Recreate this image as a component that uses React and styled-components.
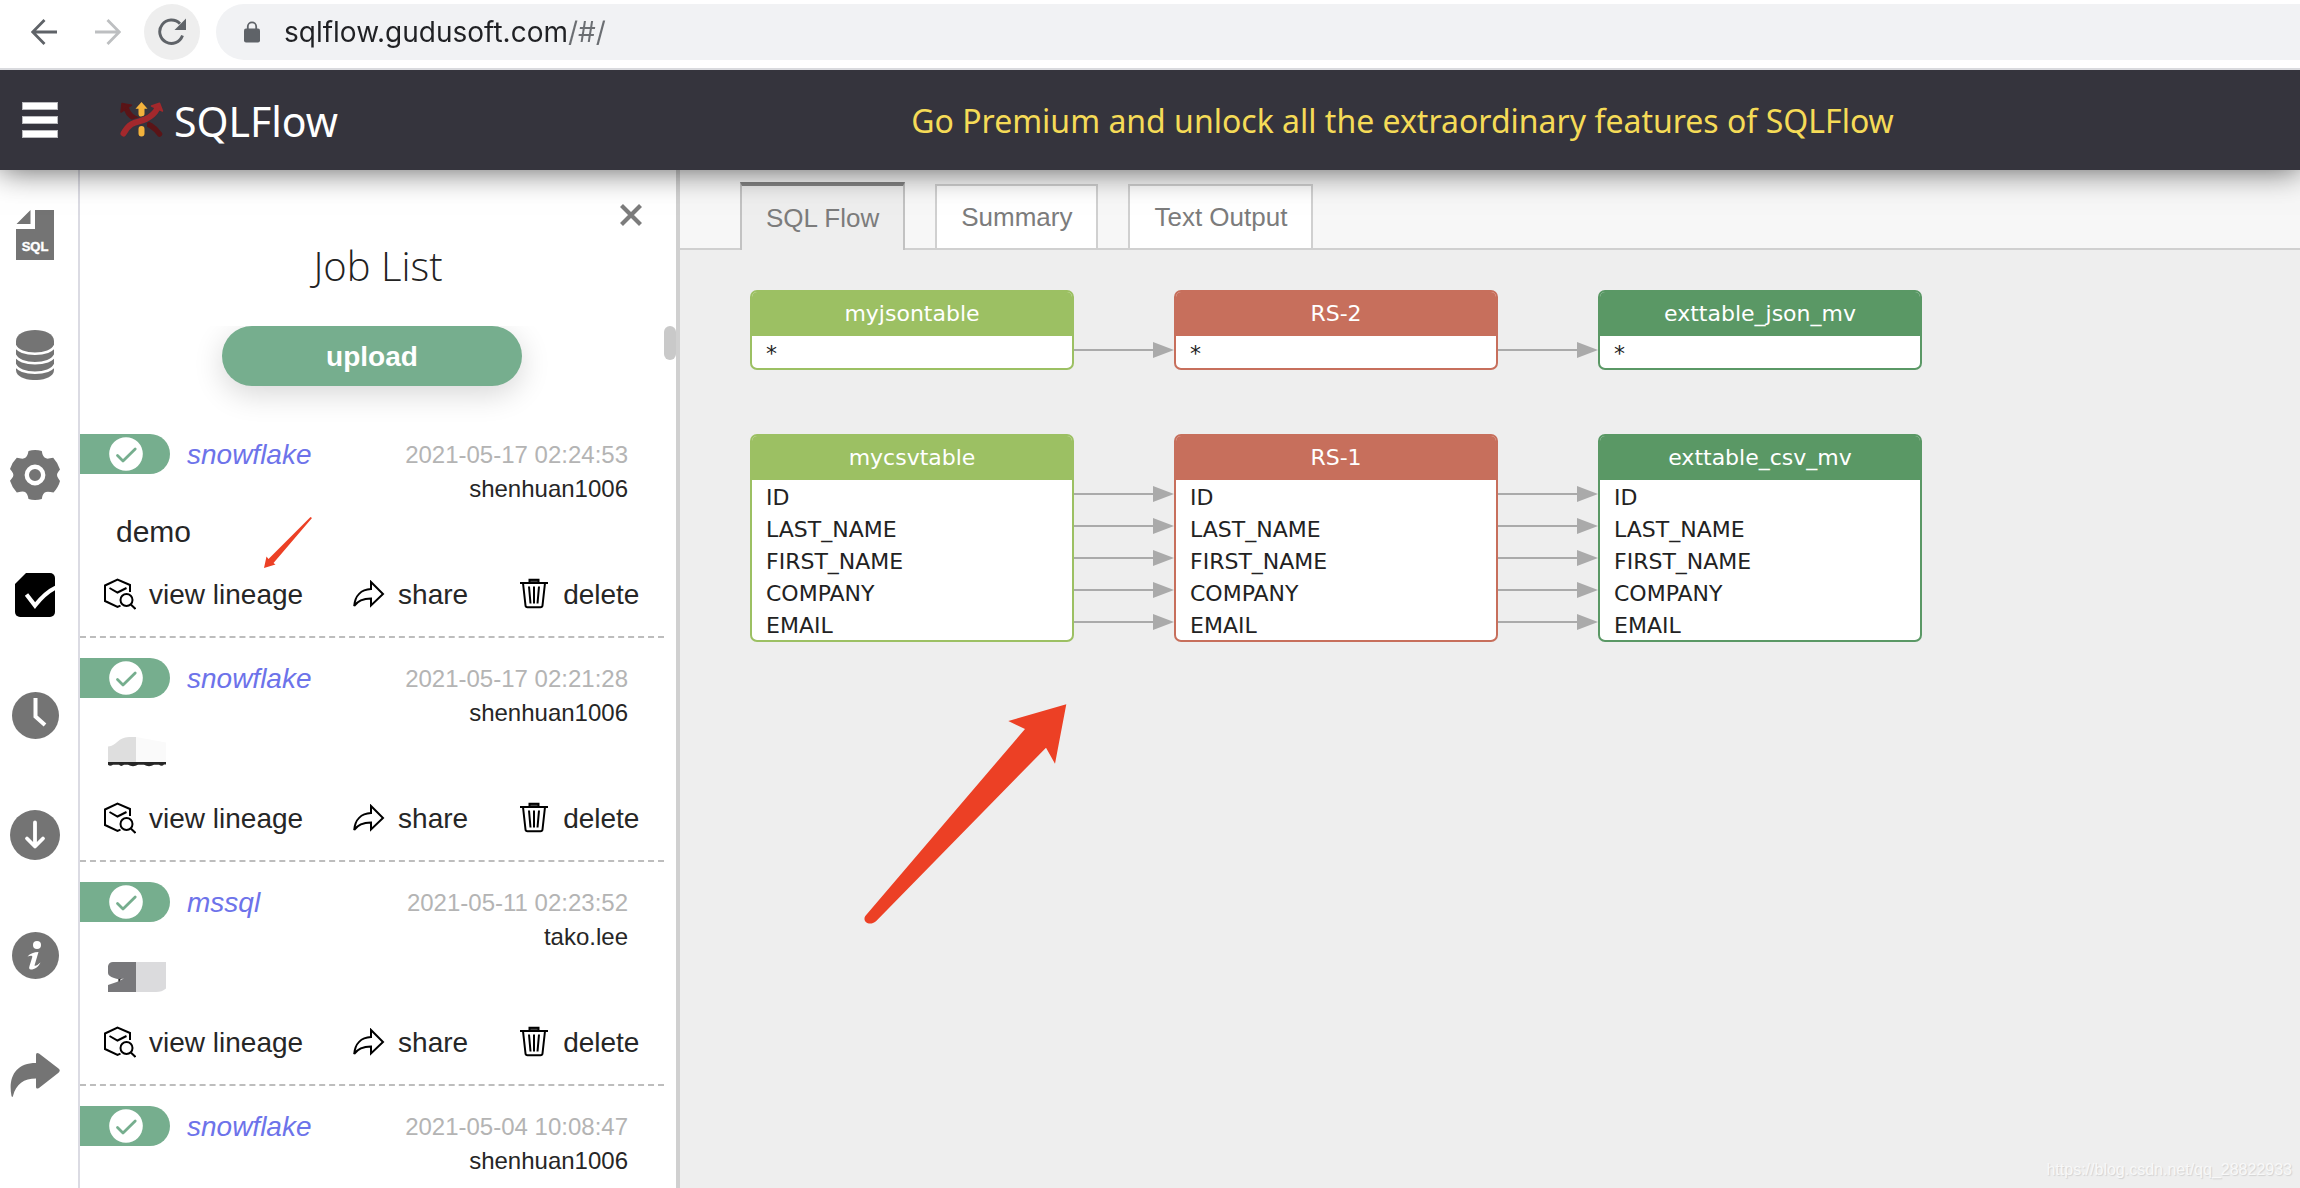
import React from "react";
import styled, { createGlobalStyle } from "styled-components";

const arial = '"Liberation Sans", Arial, sans-serif';
const humanist = '"Noto Sans", "Open Sans", sans-serif';
const green = "#76ae8e";
const iconGray = "#747474";
const red = "#ec4025";

const GlobalStyle = createGlobalStyle`
  * { box-sizing: border-box; }
  body { margin: 0; font-family: ${arial}; background: #fff; }
  button { border: 0; padding: 0; margin: 0; background: none; font: inherit; color: inherit; cursor: pointer; }
  svg { display: block; flex: none; }
`;

const Page = styled.div`
  height: 100vh;
  display: flex;
  flex-direction: column;
  overflow: hidden;
`;

const BrowserBar = styled.div`
  display: flex;
  align-items: center;
  height: 70px;
  padding: 4px 0 8px 16px;
  background: #fff;
  border-bottom: 2px solid #d9dade;
  z-index: 3;
  flex: none;
`;

const NavButton = styled.button`
  display: flex;
  align-items: center;
  justify-content: center;
  width: 56px;
  height: 56px;
  margin-right: 8px;
  border-radius: 28px;
  background: ${(p) => (p.$active ? "#eee" : "transparent")};
`;

const AddressBar = styled.form`
  display: flex;
  align-items: center;
  flex: 1;
  gap: 24px;
  height: 56px;
  margin-left: 8px;
  padding-left: 28px;
  border-radius: 28px 0 0 28px;
  background: #f1f2f4;
`;

const AddressInput = styled.input`
  flex: 1;
  min-width: 0;
  height: 40px;
  padding: 0;
  border: 0;
  outline: 0;
  font-family: Inter, Roboto, sans-serif;
  font-size: 28px;
  color: #202124;
  background: linear-gradient(90deg, #202124 284px, #6b6e72 284px);
  -webkit-background-clip: text;
  background-clip: text;
  -webkit-text-fill-color: transparent;
`;

const Header = styled.header`
  display: flex;
  align-items: center;
  height: 100px;
  flex: none;
  background: #35343d;
  box-shadow: 0 0 30px rgba(0, 0, 0, 0.65);
  z-index: 2;
`;

const Brand = styled.div`
  display: flex;
  align-items: center;
  width: 505px;
  padding-left: 22px;
`;

const MenuButton = styled.button`
  display: flex;
  flex-direction: column;
  gap: 6px;
  width: 36px;
  margin-right: 62px;
`;

const MenuBar = styled.span`
  height: 8px;
  background: #fff;
  border: 1px solid #b9b9bd;
`;

const BrandName = styled.span`
  margin-left: 10px;
  padding-top: 2px;
  font-family: ${humanist};
  font-size: 41px;
  line-height: 56px;
  color: #fff;
`;

const Premium = styled.div`
  flex: 1;
  padding-top: 2px;
  text-align: center;
  font-family: ${humanist};
  font-size: 32px;
  line-height: 44px;
  color: #f5db57;
`;

const Body = styled.div`
  display: flex;
  flex: 1;
  min-height: 0;
`;

const Rail = styled.nav`
  display: flex;
  flex-direction: column;
  width: 80px;
  padding: 5px 8px 0 0;
  border-right: 2px solid #dbdbe3;
  flex: none;
`;

const RailButton = styled.button`
  display: flex;
  align-items: center;
  justify-content: center;
  height: 120px;
  flex: none;
`;

const Panel = styled.aside`
  display: flex;
  flex-direction: column;
  width: 600px;
  border-right: 4px solid #d0d0d0;
  flex: none;
`;

const PanelHead = styled.div`
  display: flex;
  flex-direction: column;
  padding: 34px 34px 30px;
`;

const CloseButton = styled.button`
  align-self: flex-end;
`;

const PanelTitle = styled.h1`
  margin: 10px 0 0;
  text-align: center;
  font-family: "Open Sans", "Noto Sans", sans-serif;
  font-weight: 300;
  font-size: 40px;
  line-height: 60px;
  color: #222;
`;

const Scroller = styled.div`
  position: relative;
  flex: 1;
  min-height: 0;
  overflow: hidden;
  padding-right: 12px;
`;

const ScrollThumb = styled.div`
  position: absolute;
  top: 0;
  right: 0;
  width: 12px;
  height: 34px;
  border-radius: 6px;
  background: #c9c9c9;
`;

const UploadButton = styled.button`
  display: block;
  width: 300px;
  height: 60px;
  margin: 0 auto 28px;
  padding-top: 2px;
  border-radius: 30px;
  background: ${green};
  color: #fff;
  font-size: 28px;
  font-weight: 700;
  box-shadow: 0 8px 30px rgba(0, 0, 0, 0.16);
`;

const Jobs = styled.ul`
  list-style: none;
  margin: 0;
  padding: 0;
`;

const Job = styled.li`
  padding: 20px 0 10px;
  border-bottom: 2px dashed #bdbdbd;
  color: #262626;
`;

const JobHead = styled.div`
  display: flex;
  align-items: flex-start;
  height: 68px;
  padding-right: 36px;
`;

const Badge = styled.span`
  display: flex;
  align-items: center;
  width: 90px;
  height: 40px;
  padding-left: 29px;
  border-radius: 0 20px 20px 0;
  background: ${green};
`;

const Vendor = styled.span`
  flex: 1;
  padding-left: 17px;
  font-size: 28px;
  line-height: 42px;
  font-style: italic;
  color: #6d73ea;
`;

const Meta = styled.div`
  display: flex;
  flex-direction: column;
  align-items: flex-end;
  font-size: 24px;
  line-height: 28px;
`;

const Stamp = styled.time`
  line-height: 41px;
  color: #b4b4b4;
`;

const JobTitle = styled.div`
  height: 60px;
  padding-left: ${(p) => (p.$masked ? 28 : 36)}px;
  font-size: 30px;
  line-height: 60px;
`;

const Actions = styled.div`
  display: flex;
  align-items: center;
  gap: 50px;
  height: 64px;
  padding-left: 24px;
`;

const Action = styled.button`
  display: flex;
  align-items: center;
  gap: 13px;
  font-size: 28px;
  line-height: 32px;
  white-space: nowrap;
`;

const ActionLabel = styled.span`
  padding-top: 2px;
`;

const Main = styled.main`
  position: relative;
  display: flex;
  flex-direction: column;
  flex: 1;
  min-width: 0;
  background: #eee;
`;

const Tabs = styled.div`
  display: flex;
  align-items: flex-end;
  gap: 30px;
  height: 80px;
  padding-left: 60px;
  background: linear-gradient(#d0d0d0, #d0d0d0) 0 100% / 100% 2px no-repeat #f7f7f7;
`;

const Tab = styled.button`
  height: ${(p) => (p.$selected ? 68 : 66)}px;
  padding: 0 24px;
  font-size: 26px;
  color: #7c7c7c;
  background: ${(p) => (p.$selected ? "#eee" : "#fff")};
  border: 2px solid ${(p) => (p.$selected ? "#c2c2c2" : "#d0d0d0")};
  border-top: ${(p) => (p.$selected ? "4px solid #848484" : "2px solid #d0d0d0")};
  border-bottom: ${(p) => (p.$selected ? "0" : "2px solid #d0d0d0")};
`;

const Canvas = styled.div`
  display: flex;
  flex-direction: column;
  gap: 64px;
  padding: 40px 70px;
`;

const Flow = styled.div`
  display: flex;
`;

const Node = styled.section`
  width: 324px;
  border: 2px solid ${(p) => p.$color};
  border-radius: 7px;
  background: #fff;
  font-family: "DejaVu Sans", Verdana, sans-serif;
  font-size: 22px;
  color: #222;
  overflow: hidden;
`;

const NodeTitle = styled.h2`
  margin: 0;
  height: 44px;
  background: ${(p) => p.$color};
  color: #fff;
  text-align: center;
  font-size: 22px;
  font-weight: 400;
  line-height: 44px;
`;

const Columns = styled.ul`
  list-style: none;
  margin: 0;
  height: ${(p) => p.$count * 32}px;
  padding: 2px 0 0 14px;
  line-height: 32px;
`;

const Links = styled.div`
  width: 100px;
  padding-top: 46px;
`;

const BigArrow = styled.svg`
  position: absolute;
  left: 160px;
  top: 510px;
  pointer-events: none;
`;

const SmallArrow = styled.svg`
  position: absolute;
  left: 183px;
  top: 190px;
  pointer-events: none;
`;

const Watermark = styled.div`
  position: absolute;
  right: 8px;
  bottom: 8px;
  font-size: 16px;
  line-height: 20px;
  color: #f8f8f8;
  text-shadow: 1px 1px 1px #d2d2d2;
`;

const BackIcon = ({ color, flip }) => (
  <svg width="26" height="26" viewBox="0 0 26 26" fill="none" stroke={color} strokeWidth="2.8">
    <path d={flip ? "M0 13H24M12.5 1L24.3 13L12.5 25" : "M26 13H2M13.5 1L1.7 13L13.5 25"} />
  </svg>
);

const ReloadIcon = () => (
  <svg width="28" height="28" viewBox="0 0 28 28">
    <path d="M24.5 17.5A11.7 11.7 0 1 1 22 5.7" fill="none" stroke="#5f6368" strokeWidth="2.9" />
    <path d="M28 0.5V12H16.5Z" fill="#5f6368" />
  </svg>
);

const LockIcon = () => (
  <svg width="16" height="22" viewBox="0 0 16 22">
    <path d="M3.8 9V5.5a4.2 4.2 0 0 1 8.4 0V9" fill="none" stroke="#5f6368" strokeWidth="1.8" />
    <rect y="7.6" width="16" height="14" rx="2" fill="#5f6368" />
  </svg>
);

const Logo = () => (
  <svg width="44" height="36" viewBox="0 0 44 36" fill="none">
    <path d="M6.5 7C9 14 13 15.5 20 18.5S34 24 39.5 32" stroke="#5a1417" strokeWidth="5.5" strokeLinecap="round" />
    <path d="M2 1.5L11.5 3.2L1 10Z" fill="#5a1417" stroke="#5a1417" strokeWidth="1.5" strokeLinejoin="round" />
    <rect x="17" y="16" width="10" height="9" fill="#35343d" />
    <path d="M21.5 11.8V6M21.5 27V31.5" stroke="#f3b23c" strokeWidth="6" strokeLinecap="round" />
    <path d="M15.5 6.8L21.5 0L27.5 6.8Z" fill="#f3b23c" />
    <path d="M3.5 32C11 18 18 21 26 17C32 14 35 11 37 7" stroke="#35343d" strokeWidth="8" />
    <path d="M3.5 31.5C11 18 18 21 26 17C32 14 35 11 37 7" stroke="#a3282c" strokeWidth="6" strokeLinecap="round" />
    <path d="M31.5 4L39.5 1.2L42.5 9Z" fill="#a3282c" stroke="#a3282c" strokeWidth="1.5" strokeLinejoin="round" />
  </svg>
);

const SqlFileIcon = () => (
  <svg width="38" height="50" viewBox="0 0 38 50">
    <path d="M14.5 0V14H0.5ZM19 0H38V50H0V19H19Z" fill={iconGray} />
    <text x="19" y="41" textAnchor="middle" fontFamily="Liberation Sans, sans-serif" fontWeight="700" fontSize="13" fill="#fff" stroke="#fff" strokeWidth="0.4">SQL</text>
  </svg>
);

const DatabaseIcon = () => (
  <svg width="38" height="50" viewBox="0 0 38 50">
    <path d="M0 11C0 -3.6 38 -3.6 38 11V40C38 53.4 0 53.4 0 40Z" fill={iconGray} />
    <path d="M-1 15.5C3 26.5 35 26.5 39 15.5M-1 25C3 36 35 36 39 25M-1 34.5C3 45.5 35 45.5 39 34.5" fill="none" stroke="#fff" strokeWidth="2.6" />
  </svg>
);

const GearIcon = () => (
  <svg width="50" height="50" viewBox="0 0 50 50">
    <path
      fill={iconGray}
      d="M18.5 1Q25-.8 31.8 1L32.4 4Q34 9 38.5 8.6L43.2 7.8Q48 13 50 19.5L48.5 21.5Q45.5 25 48.5 28.8L50 31Q48.5 37 43.5 42.5L40.5 42Q34 40.5 32.4 46L31.8 49Q25 50.8 18.5 49L17.8 46Q16 40.5 10.5 41.8L6.8 42.5Q2 37.5 0 30.8L1.8 28.5Q5 25 1.8 21.2L0 19Q2 12.5 6.8 7.8L11 8.5Q16 9.5 17.8 4Z"
    />
    <circle cx="25" cy="25" r="8.2" fill={iconGray} stroke="#fff" strokeWidth="4.4" />
  </svg>
);

const TaskIcon = () => (
  <svg width="40" height="44" viewBox="0 0 40 44">
    <path d="M11 0H35a5 5 0 0 1 5 5V39a5 5 0 0 1-5 5H5a5 5 0 0 1-5-5V11Z" fill="#000" />
    <path d="M11.5 21.5L20 32.5C26 25 32 18.5 41 14.5" fill="none" stroke="#fff" strokeWidth="4.2" />
  </svg>
);

const ClockIcon = () => (
  <svg width="47" height="47" viewBox="0 0 47 47">
    <circle cx="23.5" cy="23.5" r="23.5" fill={iconGray} />
    <path d="M23.5 6V24.5L33 33" fill="none" stroke="#fff" strokeWidth="4" />
  </svg>
);

const DownloadIcon = () => (
  <svg width="50" height="50" viewBox="0 0 50 50">
    <circle cx="25" cy="25" r="25" fill={iconGray} />
    <path d="M25 12.5V36M17 28.5L25 36.5L33 28.5" fill="none" stroke="#fff" strokeWidth="3.8" strokeLinecap="round" strokeLinejoin="round" />
  </svg>
);

const InfoIcon = () => (
  <svg width="47" height="47" viewBox="0 0 47 47">
    <circle cx="23.5" cy="23.5" r="23.5" fill={iconGray} />
    <circle cx="25" cy="13" r="4" fill="#fff" />
    <path d="M15.5 24.5C18 21.5 22 20 26.500 20L22.5 33.5C23.5 34.5 25.5 33 28.5 30.5C26.5 35 22.5 37.5 19 37.5C17 37.5 16.8 36 17.5 34L20.3 25C20.5 23 18 23.5 15.5 24.5Z" fill="#fff" />
  </svg>
);

const ForwardIcon = () => (
  <svg width="50" height="44" viewBox="0 0 50 44">
    <path d="M26 10V2Q26-1 29 .6L48.5 15.5Q51 17.5 48.5 19.7L29 35Q26 36.5 26 34V25.5C14 25.5 6 31 3 43Q2.3 45 1.5 43C-2 25 5 10 26 10Z" fill={iconGray} />
  </svg>
);

const CloseIcon = () => (
  <svg width="22" height="22" viewBox="0 0 22 22">
    <path d="M1.5 1.5L20.5 20.5M20.5 1.5L1.5 20.5" stroke="#7c7c7c" strokeWidth="4.2" />
  </svg>
);

const CheckIcon = () => (
  <svg width="34" height="34" viewBox="0 0 34 34">
    <circle cx="17" cy="17" r="16.8" fill="#fff" />
    <path d="M8.5 18.5L14 24L26.2 12" fill="none" stroke={green} strokeWidth="2.8" strokeLinecap="round" strokeLinejoin="round" />
  </svg>
);

const LineageIcon = () => (
  <svg width="32" height="32" viewBox="0 0 32 32" fill="none" stroke="#000" strokeWidth="2">
    <path d="M26 14V7L13.5 1.5L1 7.5V23L13.5 29L16.5 27.7" />
    <path d="M5.5 10L13.5 14.5L22.5 10" />
    <circle cx="22.5" cy="22" r="6" />
    <path d="M26.8 26.5L31.5 31" />
  </svg>
);

const ShareIcon = () => (
  <svg width="32" height="28" viewBox="0 0 32 28" fill="none" stroke="#000" strokeWidth="2">
    <path d="M18 2L30 14L18 25.5V18.5C10 18.5 4.5 21 1.2 26C2 16 8 9.5 18 9Z" />
  </svg>
);

const TrashIcon = () => (
  <svg width="32" height="32" viewBox="0 0 32 32" fill="none" stroke="#000" strokeWidth="2">
    <path d="M2 5H30" />
    <path d="M11.5 4V1.8H20.5V4" fill="#444" />
    <path d="M5 5L7.5 27.5Q7.7 29.2 9.5 29.2H22.5Q24.3 29.2 24.5 27.5L27 5" />
    <path d="M11 8.5L12.5 25.5M16 8.5V25.5M21 8.5L19.5 25.5" />
  </svg>
);

const MaskLight = () => (
  <svg width="58" height="60" viewBox="0 0 58 60">
    <path d="M28 11L58 16.5V36H28Z" fill="#fafafa" />
    <path d="M0 20.5C9 20 10 11 21 11H28V36H0Z" fill="#dedede" />
    <path d="M0 36H58V38.5H56Q54 41 51 38.8H46Q41 41.5 36 38.8H30Q25 41.5 20 38.8H16Q13 41 11 38.8H5Q2 40.5 0 38.8Z" fill="#262626" />
  </svg>
);

const MaskDark = () => (
  <svg width="58" height="60" viewBox="0 0 58 60">
    <path d="M28 12H58V38.5Q54 42 48 42H28Z" fill="#dbdbdd" />
    <path d="M28 12V42H0V35Q8 33 16 28.5Q10 30 6 28Q0 26 0 23V16Q1 12 5 12Z" fill="#78787b" />
    <path d="M10 29.5L13 28.5L11 32Z" fill="#262626" />
  </svg>
);

const RAIL = [
  ["SQL file", SqlFileIcon],
  ["Databases", DatabaseIcon],
  ["Settings", GearIcon],
  ["Jobs", TaskIcon],
  ["History", ClockIcon],
  ["Download", DownloadIcon],
  ["About", InfoIcon],
  ["Share", ForwardIcon],
];

const JOBS = [
  { vendor: "snowflake", stamp: "2021-05-17 02:24:53", user: "shenhuan1006", title: "demo" },
  { vendor: "snowflake", stamp: "2021-05-17 02:21:28", user: "shenhuan1006", mask: MaskLight },
  { vendor: "mssql", stamp: "2021-05-11 02:23:52", user: "tako.lee", mask: MaskDark },
  { vendor: "snowflake", stamp: "2021-05-04 10:08:47", user: "shenhuan1006" },
];

const LIME = "#9cc063";
const CORAL = "#c76f5c";
const FOREST = "#5a9865";
const FIELDS = ["ID", "LAST_NAME", "FIRST_NAME", "COMPANY", "EMAIL"];

const FLOWS = [
  { columns: ["*"], nodes: [["myjsontable", LIME], ["RS-2", CORAL], ["exttable_json_mv", FOREST]] },
  { columns: FIELDS, nodes: [["mycsvtable", LIME], ["RS-1", CORAL], ["exttable_csv_mv", FOREST]] },
];

function JobCard({ job }) {
  const Mask = job.mask;
  return (
    <Job>
      <JobHead>
        <Badge><CheckIcon /></Badge>
        <Vendor>{job.vendor}</Vendor>
        <Meta>
          <Stamp>{job.stamp}</Stamp>
          <span>{job.user}</span>
        </Meta>
      </JobHead>
      <JobTitle $masked={Boolean(Mask)}>{Mask ? <Mask /> : job.title}</JobTitle>
      {(job.title || Mask) && (
        <Actions>
          <Action><LineageIcon /><ActionLabel>view lineage</ActionLabel></Action>
          <Action><ShareIcon /><ActionLabel>share</ActionLabel></Action>
          <Action><TrashIcon /><ActionLabel>delete</ActionLabel></Action>
        </Actions>
      )}
    </Job>
  );
}

function Connector() {
  return (
    <svg width="100" height="32" viewBox="0 0 100 32">
      <path d="M0 14H84" stroke="#aaa" strokeWidth="2" />
      <path d="M79 6L100 14L79 22Z" fill="#aaa" />
    </svg>
  );
}

function FlowRow({ columns, nodes }) {
  return (
    <Flow>
      {nodes.map(([name, color], i) => (
        <React.Fragment key={name}>
          {i > 0 && <Links>{columns.map((c) => <Connector key={c} />)}</Links>}
          <Node $color={color}>
            <NodeTitle $color={color}>{name}</NodeTitle>
            <Columns $count={columns.length}>{columns.map((c) => <li key={c}>{c}</li>)}</Columns>
          </Node>
        </React.Fragment>
      ))}
    </Flow>
  );
}

export default function App() {
  return (
    <Page>
      <GlobalStyle />
      <BrowserBar>
        <NavButton aria-label="Back"><BackIcon color="#5f6368" /></NavButton>
        <NavButton aria-label="Forward"><BackIcon color="#bdbfc1" flip /></NavButton>
        <NavButton aria-label="Reload" $active><ReloadIcon /></NavButton>
        <AddressBar>
          <LockIcon />
          <AddressInput aria-label="Address" defaultValue="sqlflow.gudusoft.com/#/" />
        </AddressBar>
      </BrowserBar>
      <Header>
        <Brand>
          <MenuButton aria-label="Menu"><MenuBar /><MenuBar /><MenuBar /></MenuButton>
          <Logo />
          <BrandName>SQLFlow</BrandName>
        </Brand>
        <Premium>Go Premium and unlock all the extraordinary features of SQLFlow</Premium>
      </Header>
      <Body>
        <Rail>
          {RAIL.map(([label, Icon]) => (
            <RailButton key={label} aria-label={label}><Icon /></RailButton>
          ))}
        </Rail>
        <Panel>
          <PanelHead>
            <CloseButton aria-label="Close"><CloseIcon /></CloseButton>
            <PanelTitle>Job List</PanelTitle>
          </PanelHead>
          <Scroller>
            <UploadButton>upload</UploadButton>
            <Jobs>{JOBS.map((job) => <JobCard key={job.stamp} job={job} />)}</Jobs>
            <ScrollThumb />
            <SmallArrow width="50" height="54" viewBox="0 0 50 54">
              <path d="M47.5 1L49 2L10.5 47L12.5 48.500L1 52L3.5 40.5L5.5 43Z" fill={red} />
            </SmallArrow>
          </Scroller>
        </Panel>
        <Main>
          <Tabs role="tablist">
            <Tab role="tab" aria-selected="true" $selected>SQL Flow</Tab>
            <Tab role="tab" aria-selected="false">Summary</Tab>
            <Tab role="tab" aria-selected="false">Text Output</Tab>
          </Tabs>
          <Canvas>
            {FLOWS.map((flow) => <FlowRow key={flow.nodes[0][0]} {...flow} />)}
          </Canvas>
          <BigArrow width="240" height="260" viewBox="-20 0 240 260">
            <path d="M206.3 24.3L195 83.7L186 67.7L16 241.3C9 247 2 241 5.300 236L165 49L148.3 41Z" fill={red} />
          </BigArrow>
          <Watermark>https://blog.csdn.net/qq_28822933</Watermark>
        </Main>
      </Body>
    </Page>
  );
}
